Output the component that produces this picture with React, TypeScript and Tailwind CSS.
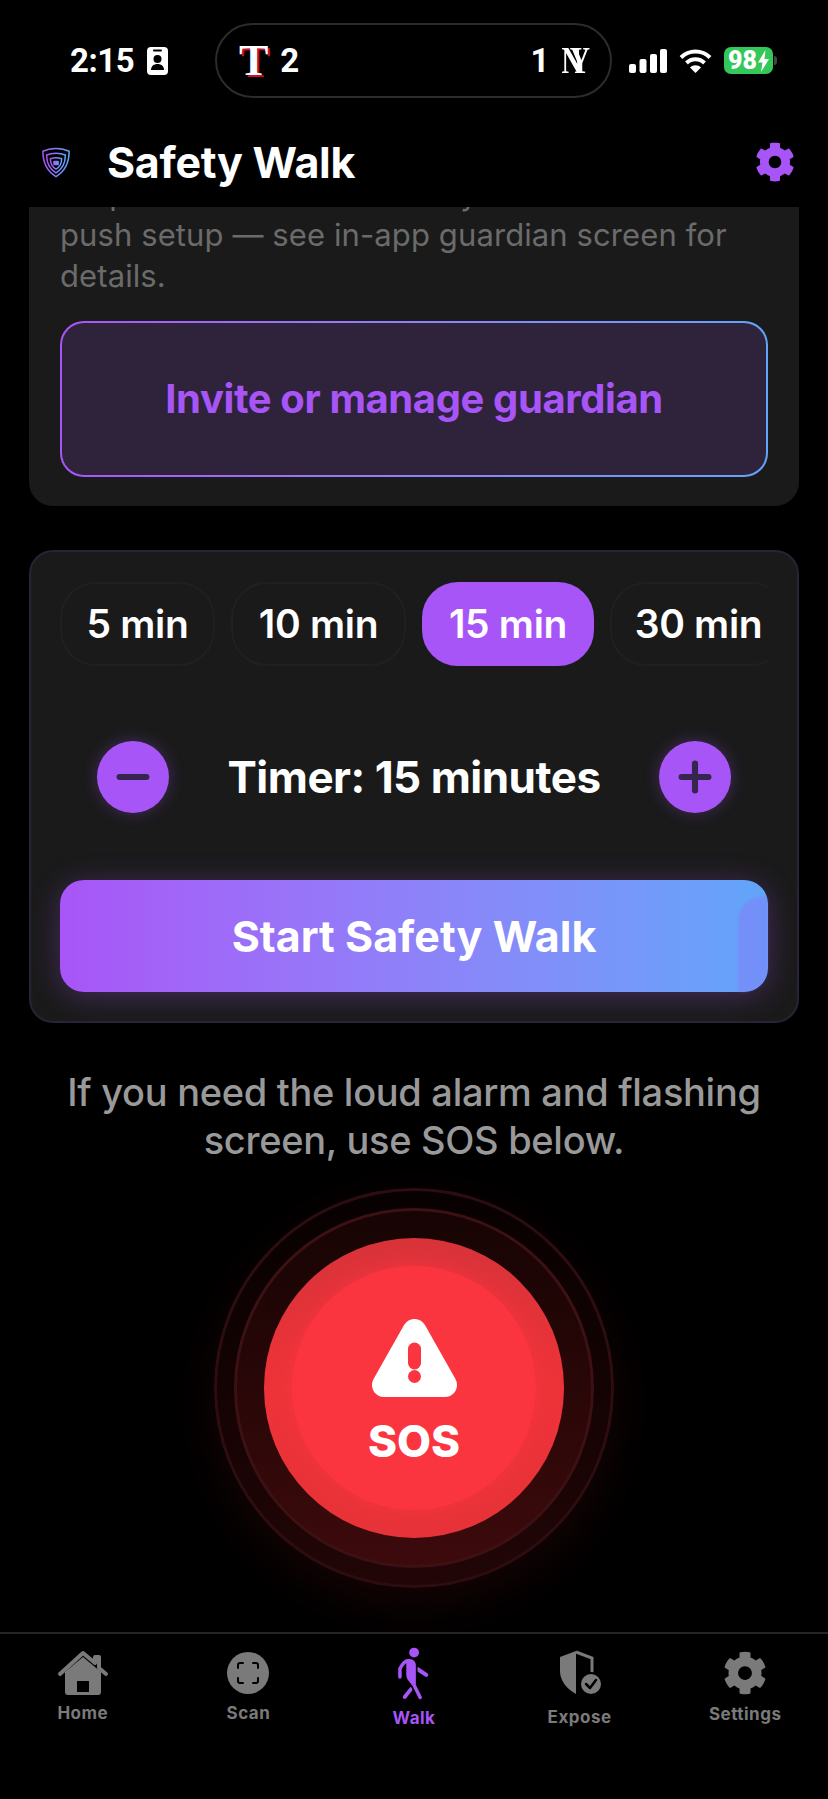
import { FaCog } from 'react-icons/fa';
import { IoWalk } from 'react-icons/io5';
import { Minus, Plus } from 'lucide-react';

const inter = { fontFamily: 'Inter, "Noto Sans", sans-serif' };
const roboto = { fontFamily: 'Roboto, sans-serif' };
const serif = { fontFamily: '"Liberation Serif", serif' };

const chips = [
  { label: '5 min', w: 'w-[155px]' },
  { label: '10 min', w: 'w-[175px]' },
  { label: '15 min', w: 'w-[172px]', active: true },
  { label: '30 min', w: 'w-[177px]' },
];

function HomeIcon() {
  return (
    <svg width="52" height="46" viewBox="0 0 52 46" fill="#7a7a7a">
      <path d="M8 22 26 7l18 15v20a3 3 0 0 1-3 3H11a3 3 0 0 1-3-3Zm12 9v11h12V31Z" fillRule="evenodd" />
      <path d="M3 24 26 3l12 10V7h4v11l7 6" fill="none" stroke="#7a7a7a" strokeWidth="4" strokeLinecap="round" strokeLinejoin="round" />
    </svg>
  );
}

function ScanIcon() {
  return (
    <svg width="42" height="42" viewBox="0 0 42 42">
      <circle cx="21" cy="21" r="21" fill="#7a7a7a" />
      <path d="M11 16v-3a2 2 0 0 1 2-2h3M26 11h3a2 2 0 0 1 2 2v3M31 26v3a2 2 0 0 1-2 2h-3M16 31h-3a2 2 0 0 1-2-2v-3" fill="none" stroke="#000" strokeWidth="2" strokeLinecap="round" />
    </svg>
  );
}

function ExposeIcon() {
  return (
    <svg width="44" height="46" viewBox="0 0 44 46">
      <path d="M18 1 2 7v14c0 10 7 18 16 23Z" fill="#7a7a7a" />
      <path d="M18 2 34 8v16" fill="none" stroke="#7a7a7a" strokeWidth="3" />
      <circle cx="33" cy="34" r="11" fill="#7a7a7a" stroke="#000" strokeWidth="2" />
      <path d="m28 34 4 4 6-8" fill="none" stroke="#000" strokeWidth="2.5" strokeLinecap="round" strokeLinejoin="round" />
    </svg>
  );
}

function ShieldLogo() {
  return (
    <svg width="30" height="33" viewBox="0 0 32 34" fill="none" strokeWidth="1.600">
      <defs>
        <linearGradient id="shield" x1="0" y1="0" x2="1" y2="0">
          <stop offset="0" stopColor="#a855f7" />
          <stop offset="1" stopColor="#60a5fa" />
        </linearGradient>
      </defs>
      <path d="M16 2c5 0 10 1 14 3 0 12-4 21-14 27C6 26 2 17 2 5c4-2 9-3 14-3Z" stroke="url(#shield)" />
      <path d="M16 7c3 0 7 .7 10 2 0 9-3 15-10 19C9 24 6 18 6 9c3-1.300 7-2 10-2Z" stroke="url(#shield)" />
      <path d="M16 12c2 0 4 .4 6 1 0 5-2 9-6 11-4-2-6-6-6-11 2-.6 4-1 6-1Z" stroke="url(#shield)" />
      <rect x="13" y="15" width="6" height="5" rx="1" fill="url(#shield)" />
    </svg>
  );
}

function WarningIcon() {
  return (
    <svg width="85" height="78" viewBox="0 0 85 78">
      <path d="M42.500 12 12 66h61Z" fill="#fff" stroke="#fff" strokeWidth="24" strokeLinejoin="round" />
      <path d="M42.500 30v14" stroke="#fb3540" strokeWidth="13" strokeLinecap="round" />
      <circle cx="42.500" cy="57.500" r="6.500" fill="#fb3540" />
    </svg>
  );
}

function StatusBar() {
  return (
    <div className="flex h-[119px] shrink-0 items-start pt-[23px]">
      <div className="flex h-[75px] w-[215px] items-center pl-[70px]">
        <span className="text-[33px] leading-none font-bold tracking-[-0.5px] text-white" style={roboto}>2:15</span>
        <svg className="ml-[13px]" width="21" height="28" viewBox="0 0 21 28">
          <rect width="21" height="28" rx="4" fill="#fff" />
          <rect x="6" y="2.500" width="9" height="2" rx="1" fill="#000" />
          <circle cx="10.500" cy="12" r="4" fill="#000" />
          <path d="M4 23c0-4 3-6 6.500-6s6.500 2 6.500 6Z" fill="#000" />
        </svg>
      </div>
      <div className="flex h-[75px] w-[397px] items-center justify-between rounded-full border-2 border-[#2c2c2c] pr-[20px] pl-[22px]">
        <div className="flex items-center gap-[12px]">
          <span className="text-[44px] leading-none font-bold text-white [text-shadow:2px_2px_0_#c8102e]" style={serif}>T</span>
          <span className="text-[33px] leading-none font-bold text-white" style={roboto}>2</span>
        </div>
        <div className="flex items-center gap-[12px]">
          <span className="text-[33px] leading-none font-bold text-white" style={roboto}>1</span>
          <span className="flex scale-y-[1.35] text-[28px] leading-none font-bold text-white" style={serif}>
            <span>N</span>
            <span className="-ml-[12px]">Y</span>
          </span>
        </div>
      </div>
      <div className="flex h-[75px] items-center pl-[17px]">
        <svg width="38" height="24" viewBox="0 0 38 24" fill="#fff">
          <rect x="0" y="15" width="7" height="9" rx="2" />
          <rect x="10.500" y="10" width="7" height="14" rx="2" />
          <rect x="21" y="5" width="7" height="19" rx="2" />
          <rect x="31" y="0" width="7" height="24" rx="2" />
        </svg>
        <svg className="ml-[12px]" width="33" height="24" viewBox="0 0 33 24" fill="none" stroke="#fff" strokeWidth="4">
          <path d="M2 8.500c8-8 21-8 29 0" />
          <path d="M7.500 14c5-5 13-5 18 0" />
          <path d="M16.500 24 11 18.500c3-3 8-3 11 0Z" fill="#fff" stroke="none" />
        </svg>
        <div className="ml-[12px] flex h-[27px] w-[49px] items-center justify-center gap-[1px] rounded-[7px] bg-[#34c759] text-[25px] leading-none font-black text-white" style={roboto}>
          98
          <svg width="11" height="22" viewBox="0 0 11 22" fill="#fff">
            <path d="M7.500 0 0 12.500h4.500L3 22l8-13H6.500Z" />
          </svg>
        </div>
        <div className="ml-[1px] h-[9px] w-[3px] rounded-r-full bg-[#444]" />
      </div>
    </div>
  );
}

function Header() {
  return (
    <div className="relative z-10 flex h-[88px] shrink-0 items-center justify-between bg-black pr-[33px] pb-[2px] pl-[41px]">
      <div className="flex items-center gap-[36px]">
        <ShieldLogo />
        <h1 className="text-[43px] leading-none font-bold tracking-[-0.3px] text-white">Safety Walk</h1>
      </div>
      <FaCog size={40} className="text-[#a855f7]" />
    </div>
  );
}

function GuardianCard() {
  return (
    <div className="-mt-[34px] rounded-b-[24px] bg-[#1a1a1a] px-[31px] pb-[29px]">
      <p className="text-[31px] leading-[41px] tracking-[0.1px] text-[#6b6b6b]">
        Requires a host and delivery via
        <br />
        push setup — see in-app guardian screen for details.
      </p>
      <div className="mt-[25px] rounded-[24px] bg-gradient-to-r from-[#a855f7] to-[#60a5fa] p-[2px]">
        <button className="block h-[152px] w-full rounded-[22px] bg-[#2f233c] text-[40px] font-bold tracking-[-0.4px] text-[#a855f7]">
          Invite or manage guardian
        </button>
      </div>
    </div>
  );
}

function TimerCard() {
  return (
    <div className="mt-[44px] overflow-hidden rounded-[24px] border-2 border-[#2a2235] bg-[#1a1a1a] px-[29px] pt-[30px] pb-[29px]">
      <div className="flex gap-[16px] overflow-hidden">
        {chips.map((c) => (
          <div
            key={c.label}
            className={`flex h-[84px] shrink-0 items-center justify-center rounded-[36px] border-2 text-[39px] font-semibold tracking-[-0.3px] text-white ${c.w} ${c.active ? 'border-[#a855f7] bg-[#a855f7]' : 'border-[#202020]'}`}
          >
            {c.label}
          </div>
        ))}
      </div>
      <div className="mt-[75px] flex items-center justify-between px-[37px]">
        <button className="flex h-[72px] w-[72px] items-center justify-center rounded-full bg-[#a855f7] text-[#36264f] shadow-[0_0_16px_rgba(168,85,247,0.3)]">
          <Minus size={46} strokeWidth={3.2} />
        </button>
        <span className="text-[44px] font-bold tracking-[-0.5px] text-white">Timer: 15 minutes</span>
        <button className="flex h-[72px] w-[72px] items-center justify-center rounded-full bg-[#a855f7] text-[#36264f] shadow-[0_0_16px_rgba(168,85,247,0.3)]">
          <Plus size={46} strokeWidth={3.2} />
        </button>
      </div>
      <div className="relative mt-[67px] rounded-[24px] shadow-[0_4px_30px_rgba(168,85,247,0.3)]">
        <button className="block h-[112px] w-full rounded-[24px] bg-gradient-to-r from-[#a855f7] to-[#60a5fa] text-[43px] font-bold text-white">
          Start Safety Walk
        </button>
        <span className="absolute top-[17px] right-0 bottom-0 w-[30px] rounded-tl-[24px] rounded-br-[24px] bg-[#a855f7]/25 blur-[1px]" />
      </div>
    </div>
  );
}

function SosButton() {
  return (
    <div className="relative mx-auto mt-[24px] flex h-[400px] w-[400px] items-center justify-center rounded-full border-[3px] border-[#2e0d10] bg-gradient-to-b from-[#080101] to-[#220607] shadow-[0_16px_50px_rgba(220,40,50,0.1)]">
      <div className="flex h-[360px] w-[360px] items-center justify-center rounded-full border-[3px] border-[#3d1114] bg-gradient-to-b from-[#170404] to-[#3d0a0c]">
        <div className="flex h-[300px] w-[300px] items-center justify-center rounded-full bg-gradient-to-b from-[#d8333a] via-[#ee3339] to-[#e63339]">
          <div className="flex h-[244px] w-[244px] flex-col items-center justify-center rounded-full bg-[#fb3540] pt-[6px] shadow-[0_0_20px_#f5343e]">
            <WarningIcon />
            <span className="mt-[22px] text-[44px] leading-none font-extrabold text-white">SOS</span>
          </div>
        </div>
      </div>
    </div>
  );
}

function Tab({ icon, label, active, labelClass }: { icon: React.ReactNode; label: string; active?: boolean; labelClass: string }) {
  return (
    <div className="flex flex-1 flex-col items-center">
      <div className="flex h-[50px] items-center justify-center">{icon}</div>
      <span className={`text-[17px] leading-none font-bold tracking-[0.5px] ${active ? 'text-[#a855f7]' : 'text-[#7a7a7a]'} ${labelClass}`}>{label}</span>
    </div>
  );
}

function TabBar() {
  return (
    <div className="flex h-[167px] shrink-0 items-start border-t-2 border-[#262626] pt-[14px]">
      <Tab icon={<HomeIcon />} label="Home" labelClass="mt-[7px]" />
      <Tab icon={<ScanIcon />} label="Scan" labelClass="mt-[7px]" />
      <Tab icon={<IoWalk size={56} className="text-[#a855f7]" />} label="Walk" active labelClass="mt-[12px]" />
      <Tab icon={<ExposeIcon />} label="Expose" labelClass="mt-[11px]" />
      <Tab icon={<FaCog size={44} className="text-[#7a7a7a]" />} label="Settings" labelClass="mt-[8px]" />
    </div>
  );
}

export default function App() {
  return (
    <div className="flex h-[1799px] w-[828px] flex-col overflow-hidden bg-black" style={inter}>
      <StatusBar />
      <Header />
      <div className="min-h-0 flex-1 overflow-hidden px-[29px]">
        <GuardianCard />
        <TimerCard />
        <p className="mt-[45px] text-center text-[38px] leading-[48px] font-medium tracking-[-0.3px] text-[#999]">
          If you need the loud alarm and flashing
          <br />
          screen, use SOS below.
        </p>
        <SosButton />
      </div>
      <TabBar />
    </div>
  );
}
